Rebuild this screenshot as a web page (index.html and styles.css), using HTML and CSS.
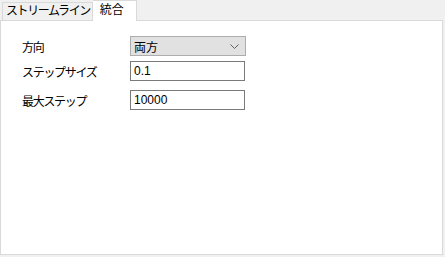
FILE: index.html
```html
<!DOCTYPE html>
<html lang="ja">
<head>
    <meta charset="UTF-8">
    <title>統合</title>
    <link rel="stylesheet" href="styles.css">
</head>
<body>
    <div class="tabs">
        <div class="tab">ストリームライン</div>
        <div class="tab active">統合</div>
    </div>
    <div class="panel">
        <div class="form">
            <div class="row first">
                <span class="label">方向</span>
                <div class="combo">
                    <span>両方</span>
                    <svg class="chevron" width="9" height="5" viewBox="0 0 9 5"><path d="M0.5 0.5 L4.5 4.5 L8.5 0.5" fill="none" stroke="#606060" stroke-width="1"/></svg>
                </div>
            </div>
            <div class="row second">
                <span class="label">ステップサイズ</span>
                <div class="field">0.1</div>
            </div>
            <div class="row third">
                <span class="label">最大ステップ</span>
                <div class="field">10000</div>
            </div>
        </div>
    </div>
</body>
</html>
```

FILE: styles.css
```css
body {
    margin: 0;
    background-color: #f0f0f0;
    font-family: "Liberation Sans", "Noto Sans CJK JP", sans-serif;
    font-size: 12px;
    color: #000000;
}

.tabs {
    display: flex;
    align-items: flex-end;
    height: 20px;
    padding-left: 2px;
}

.tab {
    height: 17px;
    line-height: 17px;
    padding: 0 2px 0 3px;
    border: 1px solid #d9d9d9;
    border-bottom: none;
    background-color: #f0f0f0;
    letter-spacing: -1.4px;
}

.tab.active {
    position: relative;
    z-index: 1;
    height: 20px;
    line-height: 19px;
    margin-bottom: -1px;
    padding: 0 12px 0 7px;
    background-color: #ffffff;
    border-left: none;
    letter-spacing: 0;
}

.panel {
    width: 441px;
    height: 233px;
    border: 1px solid #d9d9d9;
    background-color: #ffffff;
}

.form {
    padding: 15px 0 0 21px;
}

.row {
    display: flex;
    align-items: center;
    height: 20px;
}

.second { margin-top: 5px; }
.third { margin-top: 9px; }

.label {
    width: 108px;
    letter-spacing: -1.3px;
}

.combo {
    display: flex;
    align-items: center;
    justify-content: space-between;
    box-sizing: border-box;
    width: 116px;
    height: 20px;
    padding: 0 6px 0 3px;
    background-color: #e1e1e1;
    border: 1px solid #adadad;
}

.field {
    box-sizing: border-box;
    width: 115px;
    height: 20px;
    line-height: 18px;
    padding-left: 3px;
    border: 1px solid #7a7a7a;
    background-color: #ffffff;
}
```
